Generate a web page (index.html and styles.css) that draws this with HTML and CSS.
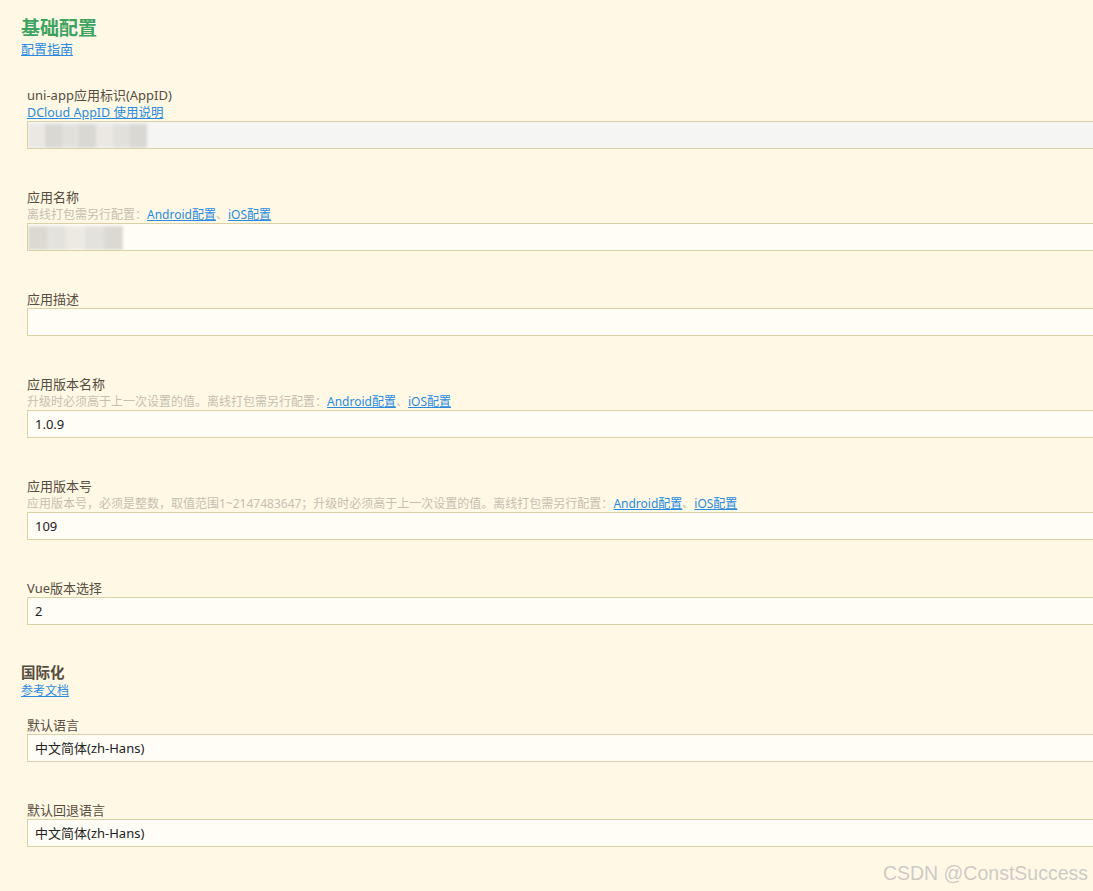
FILE: index.html
```html
<!DOCTYPE html>
<html lang="zh-CN">
<head>
  <meta charset="UTF-8">
  <title>manifest.json - 基础配置</title>
  <link rel="stylesheet" href="styles.css">
</head>
<body>
  <div class="page">
    <div class="group">
      <h2 class="group-title">基础配置</h2>
      <a class="doc-link" href="#">配置指南</a>

      <div class="fields">
        <div class="field">
          <div class="field-label">uni-app应用标识(AppID)</div>
          <a class="field-link" href="#">DCloud AppID 使用说明</a>
          <div class="input disabled">
            <span class="mask">
              <i class="m1"></i><i class="m2"></i><i class="m3"></i><i class="m2"></i><i class="m1"></i><i class="m3"></i><i class="m2"></i>
            </span>
          </div>
        </div>

        <div class="field">
          <div class="field-label">应用名称</div>
          <div class="field-hint">离线打包需另行配置：<a href="#">Android配置</a>、<a href="#">iOS配置</a></div>
          <div class="input">
            <span class="mask short">
              <i class="m2"></i><i class="m3"></i><i class="m1"></i><i class="m3"></i><i class="m2"></i>
            </span>
          </div>
        </div>

        <div class="field">
          <div class="field-label">应用描述</div>
          <div class="input"></div>
        </div>

        <div class="field">
          <div class="field-label">应用版本名称</div>
          <div class="field-hint">升级时必须高于上一次设置的值。离线打包需另行配置：<a href="#">Android配置</a>、<a href="#">iOS配置</a></div>
          <div class="input">1.0.9</div>
        </div>

        <div class="field">
          <div class="field-label">应用版本号</div>
          <div class="field-hint">应用版本号，必须是整数，取值范围1~2147483647；升级时必须高于上一次设置的值。离线打包需另行配置：<a href="#">Android配置</a>、<a href="#">iOS配置</a></div>
          <div class="input">109</div>
        </div>

        <div class="field">
          <div class="field-label">Vue版本选择</div>
          <div class="input">2</div>
        </div>
      </div>
    </div>

    <div class="group sub">
      <h3 class="group-title small">国际化</h3>
      <a class="doc-link" href="#">参考文档</a>

      <div class="fields">
        <div class="field">
          <div class="field-label">默认语言</div>
          <div class="input">中文简体(zh-Hans)</div>
        </div>

        <div class="field">
          <div class="field-label">默认回退语言</div>
          <div class="input">中文简体(zh-Hans)</div>
        </div>
      </div>
    </div>
  </div>

  <div class="watermark">CSDN @ConstSuccess</div>
</body>
</html>
```

FILE: styles.css
```css
:root {
  --bg: #fef8e5;
  --input-bg: #fffdf5;
  --border: #dcd0a6;
  --label: #564d40;
  --hint: #c6bfb0;
  --link: #2a8ae0;
  --green: #3ca361;
}

html, body {
  margin: 0;
  height: 100%;
}

body {
  background: var(--bg);
  font-family: "Noto Sans", "Noto Sans CJK SC", sans-serif;
  color: var(--label);
  overflow: hidden;
  position: relative;
}

.page {
  padding: 17px 0 0 21px;
  margin-right: -40px;
}

.group-title {
  margin: 0;
  font-size: 19px;
  line-height: 23px;
  font-weight: bold;
  color: var(--green);
}

.group-title.small {
  font-size: 14.5px;
  line-height: 19px;
  color: #564d40;
}

.doc-link {
  display: block;
  width: max-content;
  font-size: 13px;
  line-height: 18px;
  color: var(--link);
}

.group.sub {
  margin-top: 38px;
}

.group.sub .doc-link {
  font-size: 12px;
  line-height: 17px;
}

.fields {
  padding-left: 6px;
  margin-top: 28px;
  display: flex;
  flex-direction: column;
  gap: 39px;
}

.group.sub .fields {
  margin-top: 17px;
}

.field-label {
  font-size: 13px;
  line-height: 18px;
  color: var(--label);
}

.field-link {
  display: block;
  width: max-content;
  font-size: 12.5px;
  line-height: 17px;
  color: var(--link);
}

.field-hint {
  font-size: 12px;
  line-height: 17px;
  color: var(--hint);
  white-space: nowrap;
}

.field-hint a {
  color: var(--link);
}

.input {
  height: 28px;
  box-sizing: border-box;
  border: 1px solid var(--border);
  background: var(--input-bg);
  font-size: 13px;
  line-height: 26px;
  padding-left: 7px;
  color: #222;
  overflow: hidden;
}

.input.disabled {
  background: #f5f5f4;
}

.mask {
  display: flex;
  height: 24px;
  margin: 2px 0 0 -7px;
  filter: blur(1.5px);
  opacity: 0.8;
}

.mask i {
  display: block;
  width: 17px;
  height: 100%;
}

.mask .m1 { background: #e9e6df; }
.mask .m2 { background: #d4d1cb; }
.mask .m3 { background: #dedcd6; }

.mask.short i {
  width: 19px;
}

.watermark {
  position: absolute;
  right: 5px;
  bottom: 6px;
  font-family: "Liberation Sans", sans-serif;
  font-size: 19.5px;
  color: #cfcac0;
  text-shadow: 0 0 1px #fff;
}
```
